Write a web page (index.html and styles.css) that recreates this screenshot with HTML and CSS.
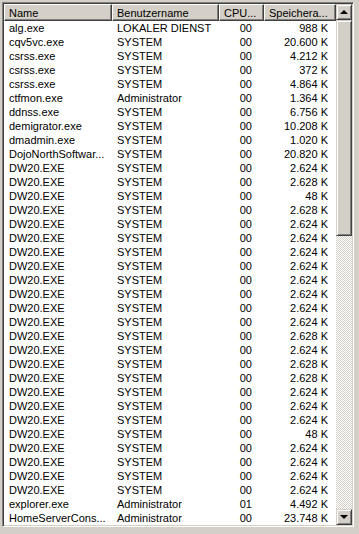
FILE: index.html
```html
<!DOCTYPE html>
<html lang="de">
<head>
    <meta charset="UTF-8">
    <meta name="viewport" content="width=device-width, initial-scale=1.0">
    <title>Prozesse</title>
    <link rel="stylesheet" href="styles.css">
</head>
<body>

    <div class="listview">
        <div class="list-area">
            <div class="header">
                <div class="col col-name">Name</div>
                <div class="col col-user">Benutzername</div>
                <div class="col col-cpu">CPU...</div>
                <div class="col col-mem">Speichera...</div>
            </div>
            <div id="rows" class="rows">
                <!-- Prozesszeilen kommen per JavaScript -->
            </div>
        </div>

        <div class="scrollbar">
            <div class="sb-button"><span class="arrow-up"></span></div>
            <div class="sb-thumb"></div>
            <div class="sb-track"></div>
            <div class="sb-button"><span class="arrow-down"></span></div>
        </div>
    </div>

    <script>
        const processes = [
            ["alg.exe", "LOKALER DIENST", "00", "988 K"],
            ["cqv5vc.exe", "SYSTEM", "00", "20.600 K"],
            ["csrss.exe", "SYSTEM", "00", "4.212 K"],
            ["csrss.exe", "SYSTEM", "00", "372 K"],
            ["csrss.exe", "SYSTEM", "00", "4.864 K"],
            ["ctfmon.exe", "Administrator", "00", "1.364 K"],
            ["ddnss.exe", "SYSTEM", "00", "6.756 K"],
            ["demigrator.exe", "SYSTEM", "00", "10.208 K"],
            ["dmadmin.exe", "SYSTEM", "00", "1.020 K"],
            ["DojoNorthSoftwar...", "SYSTEM", "00", "20.820 K"]
        ];

        // DW20.EXE Speicherwerte in Reihenfolge
        const dwMem = ["2.624", "2.628", "48", "2.628", "2.624", "2.624", "2.624", "2.624",
                       "2.624", "2.624", "2.624", "2.624", "2.628", "2.624", "2.628", "2.628",
                       "2.624", "2.624", "2.624", "48", "2.624", "2.624", "2.624", "2.624"];
        dwMem.forEach(m => processes.push(["DW20.EXE", "SYSTEM", "00", m + " K"]));

        processes.push(["explorer.exe", "Administrator", "01", "4.492 K"]);
        processes.push(["HomeServerCons...", "Administrator", "00", "23.748 K"]);

        const rows = document.getElementById("rows");
        processes.forEach(p => {
            const row = document.createElement("div");
            row.className = "row";
            row.innerHTML = `<div class="col col-name">${p[0]}</div><div class="col col-user">${p[1]}</div>` +
                            `<div class="col col-cpu">${p[2]}</div><div class="col col-mem">${p[3]}</div>`;
            rows.appendChild(row);
        });
    </script>

</body>
</html>
```

FILE: styles.css
```css
body {
    margin: 0;
    padding: 2px;
    background-color: #d4d0c8;
    font-family: "Liberation Sans", Arial, sans-serif;
    font-size: 11px;
    color: #000;
}
.listview {
    display: flex;
    width: 348px;
    height: 521px;
    border-top: 1px solid #808080;
    border-left: 1px solid #808080;
    border-right: 1px solid #fff;
    border-bottom: 1px solid #fff;
    box-shadow: inset 1px 1px 0 #404040, inset -1px -1px 0 #d4d0c8;
    padding: 1px;
}
.list-area {
    width: 332px;
    background-color: #fff;
    overflow: hidden;
}
.header {
    display: flex;
    height: 17px;
}
.header .col {
    box-sizing: border-box;
    height: 17px;
    line-height: 14px;
    padding-top: 1px;
    background-color: #d4d0c8;
    border-top: 1px solid #fff;
    border-left: 1px solid #fff;
    border-right: 1px solid #404040;
    border-bottom: 1px solid #404040;
    box-shadow: inset -1px -1px 0 #808080;
    text-align: left;
    padding-left: 4px;
}
.row {
    display: flex;
    height: 14px;
    line-height: 14px;
}
.col {
    white-space: nowrap;
    overflow: hidden;
}
.row .col {
    padding-left: 5px;
}
.col-name { width: 108px; }
.col-user { width: 107px; }
.col-cpu { width: 45px; }
.col-mem { width: 72px; }
.row .col-name, .row .col-user { box-sizing: border-box; }
.row .col-cpu {
    box-sizing: border-box;
    text-align: right;
    padding-right: 12px;
}
.row .col-mem {
    box-sizing: border-box;
    text-align: right;
    padding-right: 8px;
}
.scrollbar {
    width: 16px;
    display: flex;
    flex-direction: column;
}
.sb-button, .sb-thumb {
    box-sizing: border-box;
    background-color: #d4d0c8;
    border-top: 1px solid #d4d0c8;
    border-left: 1px solid #d4d0c8;
    border-right: 1px solid #404040;
    border-bottom: 1px solid #404040;
    box-shadow: inset 1px 1px 0 #fff, inset -1px -1px 0 #808080;
}
.sb-button {
    height: 16px;
    display: flex;
    align-items: center;
    justify-content: center;
}
.sb-thumb {
    height: 216px;
}
.sb-track {
    flex: 1;
    background: repeating-conic-gradient(#fff 0 25%, #d4d0c8 0 50%) 0 0 / 2px 2px;
}
.arrow-up {
    width: 0;
    height: 0;
    border-left: 4px solid transparent;
    border-right: 4px solid transparent;
    border-bottom: 4px solid #000;
}
.arrow-down {
    width: 0;
    height: 0;
    border-left: 4px solid transparent;
    border-right: 4px solid transparent;
    border-top: 4px solid #000;
}
```
